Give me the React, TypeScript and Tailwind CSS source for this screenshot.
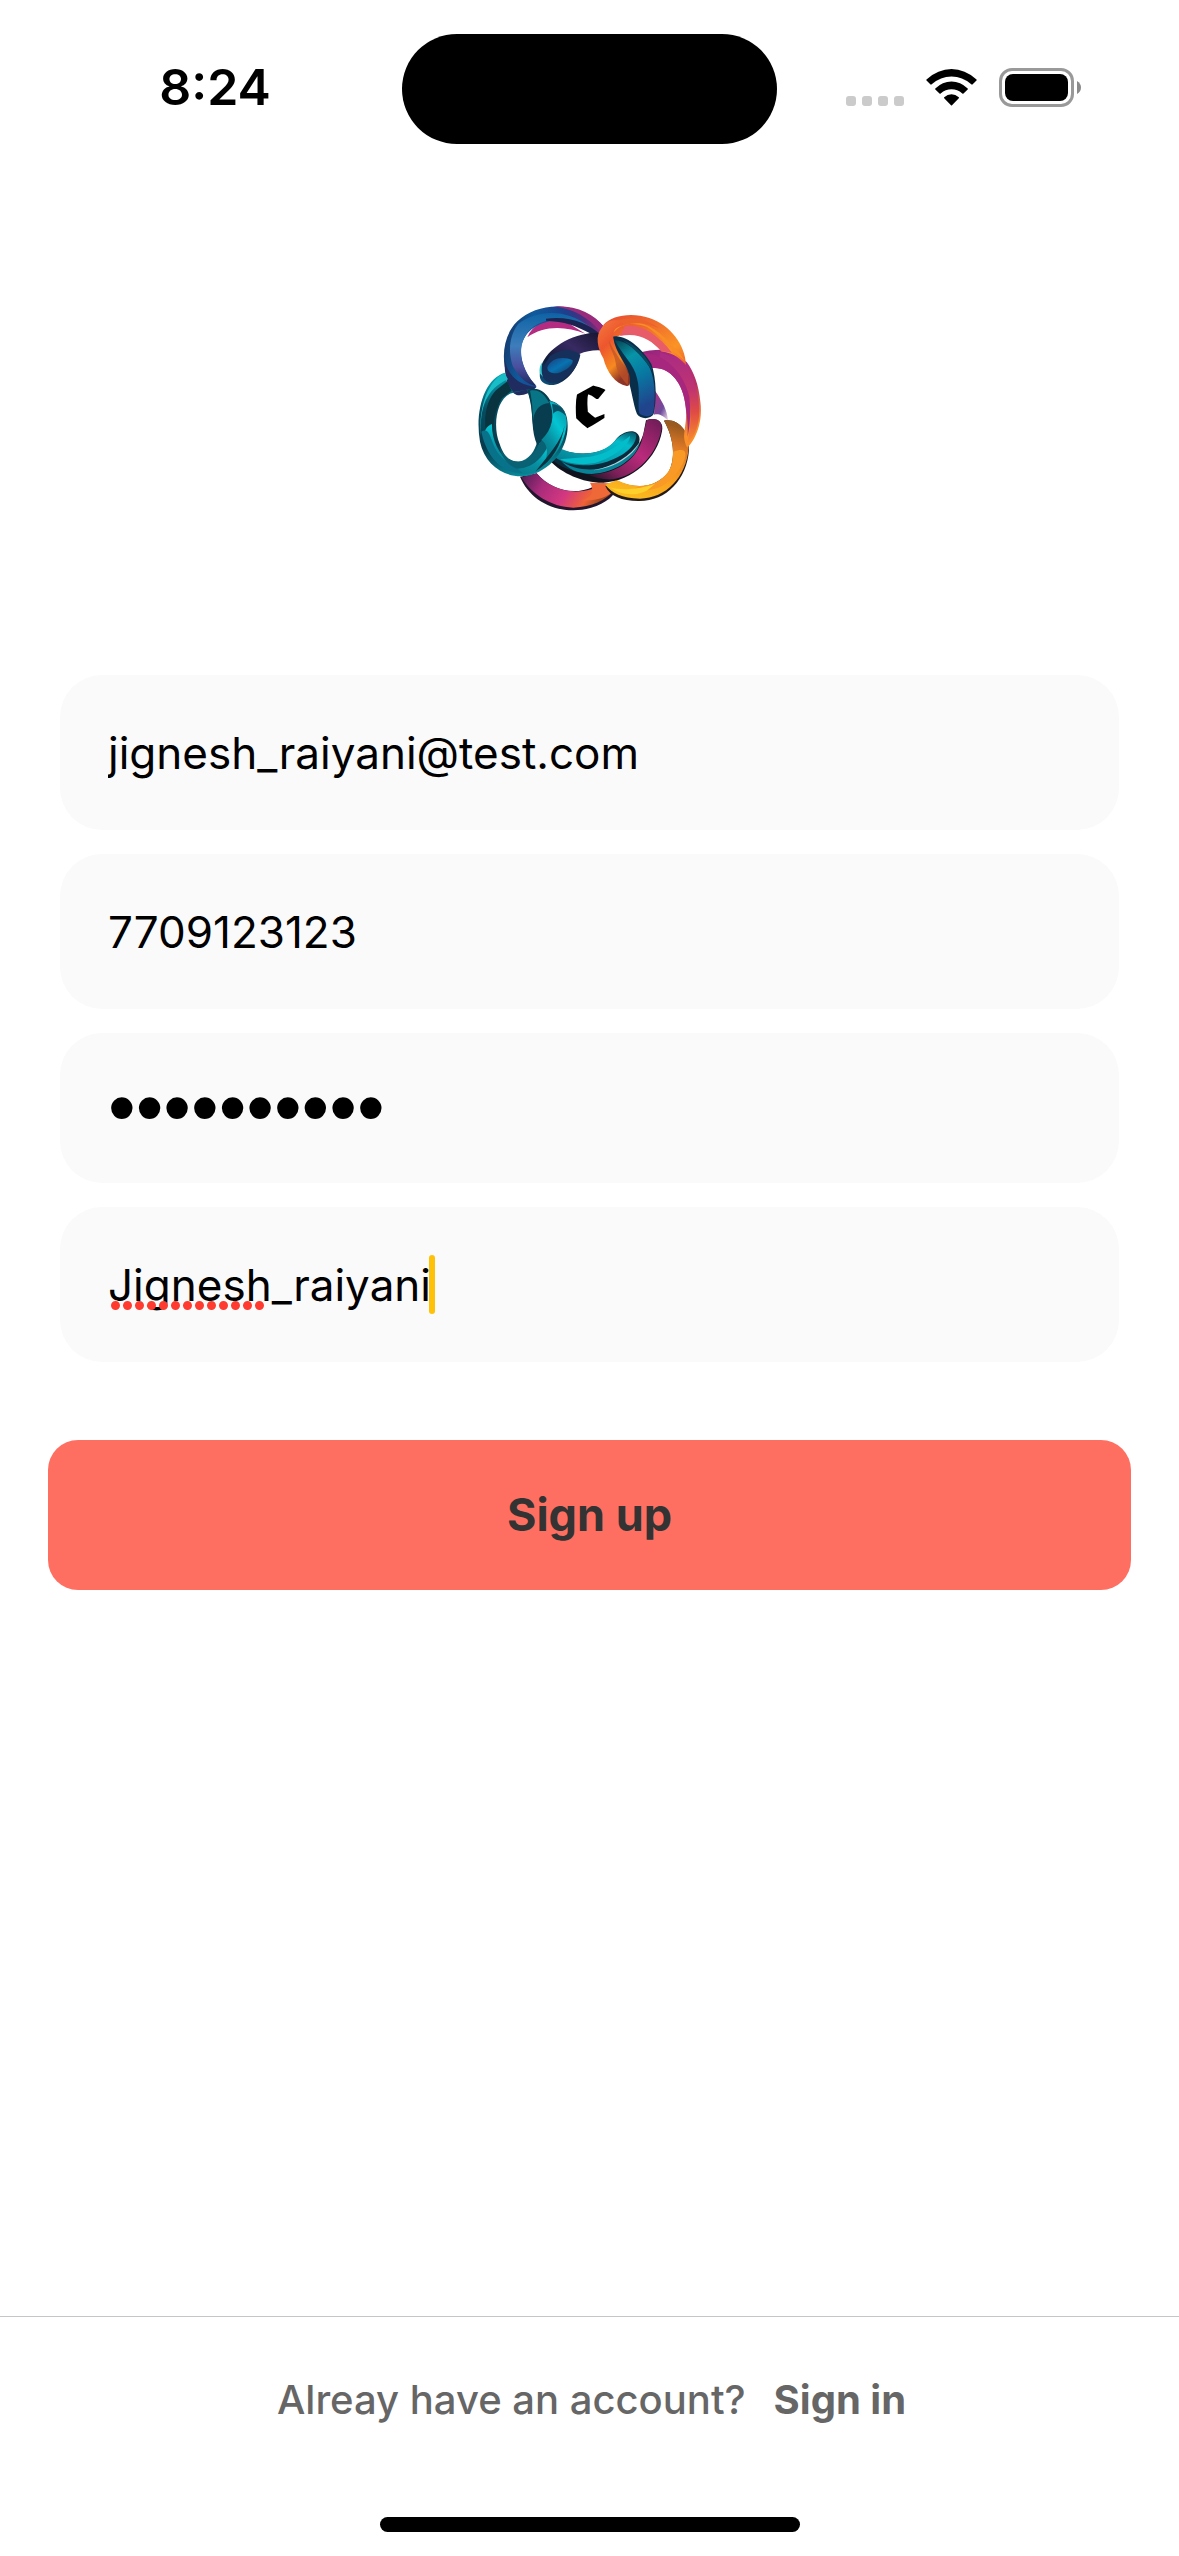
import React from "react";

function StatusBar() {
  return (
    <header className="grid grid-cols-[1fr_375px_1fr] items-center pt-[34px]">
      <div className="flex justify-center pb-1 pl-7">
        <time className="text-[50px] leading-[60px] font-semibold text-black">8:24</time>
      </div>
      <div className="h-[110px] rounded-full bg-black" />
      <div className="flex items-center justify-center pr-7 pb-1">
        <svg className="h-[39px] w-[236px]" viewBox="0 0 236 39" aria-label="Signal, Wi-Fi and battery">
          <g fill="#cbcbcb">
            <rect x="0" y="28" width="10" height="10" rx="3" />
            <rect x="16" y="28" width="10" height="10" rx="3" />
            <rect x="32" y="28" width="10" height="10" rx="3" />
            <rect x="48" y="28" width="10" height="10" rx="3" />
          </g>
          <g fill="#000">
            <path d="M80.5 11.5 Q92 1 105.500 1 Q119 1 130.500 11.500 Q131 12 130.500 12.500 L126.700 16.300 Q126 17 125.300 16.300 Q116.500 8.500 105.500 8.500 Q94.500 8.500 85.700 16.300 Q85 17 84.300 16.300 L80.500 12.500 Q80 12 80.500 11.500Z" />
            <path d="M89.300 20.500 Q96.500 13.500 105.500 13.500 Q114.500 13.500 121.700 20.500 Q122 21 121.700 21.400 L117.500 25.500 Q117 26 116.300 25.500 Q111.500 21.300 105.500 21.300 Q99.500 21.300 94.700 25.500 Q94 26 93.500 25.500 L89.300 21.400 Q89 21 89.300 20.500Z" />
            <path d="M98.200 29.300 Q101.500 26.300 105.500 26.300 Q109.500 26.300 112.800 29.300 Q113.300 29.800 112.800 30.300 L106 37.200 Q105.500 37.600 105 37.200 L98.200 30.300 Q97.700 29.800 98.200 29.300Z" />
          </g>
          <rect x="154.500" y="1.500" width="72" height="36" rx="11.500" fill="none" stroke="#999" strokeWidth="3" />
          <rect x="159" y="6" width="63" height="27" rx="8" fill="#000" />
          <path d="M231 13 Q235 15.500 235 19.500 Q235 23.500 231 26Z" fill="#8a8a8a" />
        </svg>
      </div>
    </header>
  );
}

function Logo() {
  return (
    <svg className="h-[240px] w-[260px]" viewBox="0 0 780 720" role="img" aria-label="Logo">
      <defs>
        <linearGradient id="blueRing" x1="0" y1="0" x2="1" y2="0.2">
          <stop offset="0" stopColor="#17315f" />
          <stop offset="0.3" stopColor="#0f5a9c" />
          <stop offset="0.6" stopColor="#1d3f8c" />
          <stop offset="0.8" stopColor="#4a2f80" />
          <stop offset="1" stopColor="#8d2a78" />
        </linearGradient>
        <linearGradient id="blueFace" x1="0" y1="0" x2="0" y2="1">
          <stop offset="0" stopColor="#0e63a4" />
          <stop offset="0.45" stopColor="#3d7dbb" />
          <stop offset="0.75" stopColor="#4b4d9d" />
          <stop offset="1" stopColor="#1c2b5e" />
        </linearGradient>
        <linearGradient id="darkArc" x1="0" y1="1" x2="1" y2="0">
          <stop offset="0" stopColor="#0a5b86" />
          <stop offset="0.3" stopColor="#111a38" />
          <stop offset="0.6" stopColor="#382a62" />
          <stop offset="1" stopColor="#101126" />
        </linearGradient>
        <linearGradient id="eye" x1="0" y1="0" x2="1" y2="1">
          <stop offset="0" stopColor="#1c3b7c" />
          <stop offset="0.5" stopColor="#0873b2" />
          <stop offset="1" stopColor="#173562" />
        </linearGradient>
        <linearGradient id="tealRight" x1="0" y1="0" x2="0.3" y2="1">
          <stop offset="0" stopColor="#07424f" />
          <stop offset="0.3" stopColor="#0794a8" />
          <stop offset="0.6" stopColor="#0878a2" />
          <stop offset="1" stopColor="#20458d" />
        </linearGradient>
        <linearGradient id="orangeTop" x1="0" y1="0" x2="1" y2="1">
          <stop offset="0" stopColor="#e84a32" />
          <stop offset="0.4" stopColor="#ef6e2c" />
          <stop offset="0.75" stopColor="#fb9425" />
          <stop offset="1" stopColor="#ee642f" />
        </linearGradient>
        <linearGradient id="orangeLeg" x1="0" y1="0" x2="0.5" y2="1">
          <stop offset="0" stopColor="#f47a3d" />
          <stop offset="0.4" stopColor="#ed562e" />
          <stop offset="0.75" stopColor="#f78a20" />
          <stop offset="1" stopColor="#8e3427" />
        </linearGradient>
        <linearGradient id="magentaRing" x1="0" y1="0" x2="0.5" y2="1">
          <stop offset="0" stopColor="#8f2478" />
          <stop offset="0.35" stopColor="#b42b86" />
          <stop offset="0.65" stopColor="#b73164" />
          <stop offset="1" stopColor="#f9902a" />
        </linearGradient>
        <linearGradient id="redFace" x1="0" y1="0" x2="0" y2="1">
          <stop offset="0" stopColor="#a92b84" />
          <stop offset="0.4" stopColor="#bf3472" />
          <stop offset="0.65" stopColor="#e04a45" />
          <stop offset="1" stopColor="#f9912b" />
        </linearGradient>
        <linearGradient id="amber" x1="0.6" y1="0" x2="0.3" y2="1">
          <stop offset="0" stopColor="#9b5a20" />
          <stop offset="0.25" stopColor="#df7a25" />
          <stop offset="0.6" stopColor="#f99a20" />
          <stop offset="1" stopColor="#fbbc1e" />
        </linearGradient>
        <linearGradient id="magentaBottom" x1="0" y1="0" x2="1" y2="0.25">
          <stop offset="0" stopColor="#4a1c50" />
          <stop offset="0.3" stopColor="#a92b7c" />
          <stop offset="0.6" stopColor="#d33880" />
          <stop offset="0.85" stopColor="#ee6138" />
          <stop offset="1" stopColor="#a34a20" />
        </linearGradient>
        <linearGradient id="magentaInner" x1="1" y1="0" x2="0" y2="1">
          <stop offset="0" stopColor="#6a1c55" />
          <stop offset="0.45" stopColor="#bb2a7c" />
          <stop offset="0.75" stopColor="#7c2058" />
          <stop offset="1" stopColor="#10131f" />
        </linearGradient>
        <linearGradient id="tealBottom" x1="0" y1="1" x2="1" y2="0">
          <stop offset="0" stopColor="#077388" />
          <stop offset="0.4" stopColor="#05a2b2" />
          <stop offset="0.75" stopColor="#04bccb" />
          <stop offset="1" stopColor="#064f60" />
        </linearGradient>
        <linearGradient id="tealLeft" x1="0.3" y1="0" x2="0.5" y2="1">
          <stop offset="0" stopColor="#08a5b5" />
          <stop offset="0.3" stopColor="#064c60" />
          <stop offset="0.65" stopColor="#073a4b" />
          <stop offset="1" stopColor="#078c9d" />
        </linearGradient>
        <linearGradient id="tealLobe" x1="0.8" y1="0" x2="0.2" y2="1">
          <stop offset="0" stopColor="#0a94a6" />
          <stop offset="0.35" stopColor="#04c5d2" />
          <stop offset="0.65" stopColor="#078ea0" />
          <stop offset="1" stopColor="#087282" />
        </linearGradient>
        <linearGradient id="violetTail" x1="0" y1="0" x2="1" y2="1">
          <stop offset="0" stopColor="#b52d82" />
          <stop offset="0.6" stopColor="#6d4b9c" />
          <stop offset="1" stopColor="#f3ddec" />
        </linearGradient>
      </defs>

      <path d="M180 560C205 620 265 661 340 661C400 660 446 635 464 608L430 578L400 590C340 618 272 600 230 550Z" fill="#24152e" />
      <path d="M184 562C215 612 270 651 340 653C395 651 440 630 458 604L430 578L398 596C340 616 272 600 230 550Z" fill="url(#magentaBottom)" />
      <path d="M390 578L450 580L458 606C430 628 400 632 365 632C392 622 406 606 390 578Z" fill="#ef6838" />

      <path d="M612 392C655 384 690 425 687 480C680 570 618 635 535 633C485 632 450 620 436 588L470 572C530 600 590 592 626 545C648 505 642 445 612 392Z" fill="#241a17" />
      <path d="M612 392C655 384 690 425 686 475C679 560 618 626 540 626C485 624 456 610 436 584L470 570C530 600 590 592 626 545C648 505 642 445 612 392Z" fill="url(#amber)" />
      <path d="M640 485C682 470 682 490 668 522C635 585 580 612 522 596L540 588C590 588 625 558 637 520Z" fill="#f89a25" />
      <path d="M450 592C490 605 550 594 585 582L560 602C525 620 480 615 450 592Z" fill="#fdd02b" />

      <path d="M538 188C560 182 590 178 620 180L680 216C702 245 716 285 721 335C731 410 696 460 682 473C660 430 684 416 677 350C670 275 625 228 575 235Z" fill="url(#magentaRing)" />
      <path d="M600 186L674 220C700 260 722 320 717 380C712 425 696 448 681 462C692 415 696 365 688 326C677 270 650 224 600 205Z" fill="url(#redFace)" />
      <path d="M542 190C600 184 668 235 688 320C693 360 691 400 683 440C684 410 682 380 677 350C670 275 625 228 575 235Z" fill="#a7267e" />
      <path d="M585 302C608 335 622 362 624 391C606 374 594 370 582 374Z" fill="url(#violetTail)" />

      <path d="M430 105C455 76 515 66 568 84C632 106 676 165 678 225C662 208 645 190 604 184C565 137 510 114 464 145Z" fill="url(#orangeTop)" />
      <path d="M495 108C545 102 592 132 636 188L604 184C575 150 535 126 480 138Z" fill="#e85b68" />
      <path d="M455 99C510 79 578 100 628 158C650 178 666 196 674 212C632 180 603 136 560 110C520 96 485 98 460 128Z" fill="#f98e27" />
      <path d="M450 100C495 78 550 80 598 115C555 94 505 93 457 120Z" fill="#ec622d" />

      <path d="M202 142C218 104 255 84 300 84L376 131C315 107 250 106 202 142Z" fill="#b42c82" />
      <path d="M205 298C168 319 145 292 142 258C122 205 130 135 172 94C235 35 355 29 434 112L414 140C375 106 325 91 270 94C220 104 187 134 183 178C181 217 202 260 230 291Z" fill="url(#blueRing)" />
      <path d="M280 49C345 44 402 70 432 110L424 128C385 82 340 56 280 49Z" fill="#982b7b" />
      <path d="M175 101C235 58 320 55 392 112C334 81 270 78 220 110C190 134 180 166 184 203C190 238 210 267 229 287C210 286 180 270 158 227C143 182 149 135 175 101Z" fill="url(#blueFace)" />
      <path d="M134 208C143 255 174 285 229 291C212 311 188 318 170 315C145 305 132 260 134 208Z" fill="#202b60" />
      <path d="M258 86C325 76 388 100 420 133L390 130C350 108 312 94 258 92Z" fill="#1b2450" />

      <path d="M240 246C244 196 302 145 380 131C406 125 432 130 448 150L442 184C413 178 385 181 358 192C355 244 306 290 268 285C243 281 237 266 240 246Z" fill="url(#darkArc)" />
      <path d="M270 198C305 174 340 177 361 194C353 245 304 284 268 278C242 269 242 240 255 222Z" fill="#15315b" />
      <path d="M262 232C273 205 308 197 338 211C342 224 316 245 291 250C270 250 262 244 262 232Z" fill="url(#eye)" />
      <path d="M239 250C237 238 240 225 247 217C244 238 244 250 249 261Z" fill="#39c6cd" />

      <path d="M450 143C490 124 548 177 574 222C590 266 590 335 581 372C572 389 540 388 531 372C520 345 514 295 503 265C492 220 463 190 450 143Z" fill="#092e4a" />
      <path d="M464 151C500 151 552 195 571 238C588 280 586 337 579 371C571 381 548 381 538 370C532 342 542 306 531 265C522 222 485 193 464 151Z" fill="url(#tealRight)" />
      <path d="M488 151C528 164 568 205 578 244C551 206 524 176 488 151Z" fill="#0a4760" />

      <path d="M425 113C445 84 482 87 492 103C468 108 457 122 460 145C467 190 500 220 508 256C512 275 510 290 500 288C466 282 440 246 430 205C412 173 405 138 425 113Z" fill="url(#orangeLeg)" />
      <path d="M447 151C457 180 493 222 505 252L503 285C487 267 470 247 467 218C463 190 448 177 447 151Z" fill="#bd5328" opacity="0.7" />

      <path d="M558 391C587 380 613 393 606 424C592 504 518 574 430 578C370 579 305 550 270 512L310 495C395 560 520 530 550 432Z" fill="#10131d" />
      <path d="M560 391C587 380 611 393 604 421C590 494 530 557 460 568C430 570 405 563 380 553C450 558 530 520 548 442Z" fill="url(#magentaInner)" />
      <path d="M289 474C350 501 433 495 464 454C484 423 528 412 538 441C547 482 475 540 397 548C340 551 296 530 276 508Z" fill="#0a2b3b" />
      <path d="M286 468C350 505 428 494 465 452C487 428 522 418 529 434C530 485 440 528 370 526C335 526 305 517 285 502Z" fill="url(#tealBottom)" />
      <path d="M390 500C445 492 475 464 510 438C512 460 463 503 404 519C365 527 324 520 300 508Z" fill="#03bdca" />
      <path d="M303 512C365 560 496 543 540 454C533 503 466 550 395 552C350 550 323 536 303 512Z" fill="#078297" />
      <path d="M400 541C465 529 511 497 539 457C516 502 465 534 400 541Z" fill="#a9d5dc" />

      <path fillRule="evenodd" d="M135 248C72 266 44 365 60 455C76 533 148 572 213 555C290 530 333 455 321 385C315 352 290 337 268 331C256 303 229 294 202 299L160 306C145 288 137 268 135 248ZM160 308C110 318 96 408 119 462C131 499 151 517 176 515C206 511 226 482 232 453C214 415 219 370 211 330L201 299Z" fill="url(#tealLeft)" />
      <path d="M134 249C75 275 55 374 63 438C58 352 80 296 144 268Z" fill="#19bdc7" />
      <path d="M108 301C63 348 64 451 117 510C94 450 91 383 126 325L155 302L142 274Z" fill="#08333f" />
      <path d="M96 402C94 455 127 521 177 524C222 517 232 484 239 458L270 445L303 450C286 502 240 551 190 553C121 550 84 488 72 430C77 414 86 405 96 402Z" fill="url(#tealLobe)" />
      <path d="M64 425C78 493 121 551 187 548C158 520 116 518 94 447C86 421 76 417 64 425Z" fill="#08728a" />
      <path d="M119 470C135 510 163 520 193 512C226 501 232 467 246 448L264 468C238 521 202 535 171 536C141 524 125 501 119 470Z" fill="#096174" />
      <path d="M203 300C233 287 260 306 276 341C285 380 264 416 246 450L232 466C213 425 220 376 211 336Z" fill="#073d4e" />
      <path d="M210 302C237 296 252 312 268 339C240 340 222 361 219 393C219 358 215 326 210 302Z" fill="#087586" />
      <path d="M268 333C306 340 327 377 319 413C309 465 286 499 252 524C267 490 262 459 244 450C278 418 286 377 268 333Z" fill="url(#tealLobe)" />
      <path d="M276 342C306 345 313 361 317 377C299 360 289 359 280 371Z" fill="#075166" />
      <path d="M314 406C305 462 279 512 227 544C270 490 304 455 314 406Z" fill="#09313f" />

      <text x="391" y="404" textAnchor="middle" fontSize="212" fontWeight="700" fill="#000" className="font-['DejaVu_Math_TeX_Gyre','DejaVu_Sans','Liberation_Serif',serif]">𝖈</text>
    </svg>
  );
}

type FieldProps = {
  label: string;
  type: string;
  value: string;
  children?: React.ReactNode;
};

function Field({ label, type, value, children }: FieldProps) {
  return (
    <div className="relative">
      <input
        type={type}
        aria-label={label}
        defaultValue={value}
        spellCheck={false}
        autoComplete="off"
        className={
          type === "password"
            ? "block h-[150px] w-full rounded-[42px] bg-[#fafafa] px-12 font-['Liberation_Sans',sans-serif] text-[79px] text-black outline-none"
            : "block h-[155px] w-full rounded-[42px] bg-[#fafafa] px-12 text-[44px] text-black outline-none"
        }
      />
      {children}
    </div>
  );
}

export default function App() {
  return (
    <div className="flex min-h-screen flex-col bg-white font-[Inter,'Liberation_Sans',sans-serif]">
      <StatusBar />
      <main className="flex flex-1 flex-col">
        <div className="flex justify-center pt-[146px]">
          <Logo />
        </div>
        <form className="mt-[145px] px-12" onSubmit={(e) => e.preventDefault()}>
          <div className="flex flex-col gap-6 px-3">
            <Field label="Email" type="email" value="jignesh_raiyani@test.com" />
            <Field label="Phone" type="tel" value="7709123123" />
            <Field label="Password" type="password" value="abcdefghij" />
            <Field label="Username" type="text" value="Jignesh_raiyani">
              <svg className="pointer-events-none absolute top-[94px] left-[51px] h-[9px] w-[154px]" viewBox="0 0 154 9" aria-hidden="true">
                <path d="M4.500 4.500H149" stroke="#ff3b30" strokeWidth="9" strokeLinecap="round" strokeDasharray="0 12" />
              </svg>
              <span className="pointer-events-none absolute top-12 left-[369px] h-[59px] w-[6px] rounded-full bg-[#ffc107]" />
            </Field>
          </div>
          <button type="submit" className="mt-[78px] h-[150px] w-full rounded-[30px] bg-[#ff6f61] text-[45px] font-bold text-[#333]">
            Sign up
          </button>
        </form>
      </main>
      <footer className="flex h-[240px] flex-col items-center justify-between border-t border-[#c6c6c6] pt-[59px] pb-6">
        <p className="flex gap-7 pl-1 text-[40px] leading-[48px] font-medium text-[#666]">
          <span>Alreay have an account?</span>
          <a href="#signin" className="font-bold">Sign in</a>
        </p>
        <div className="h-[15px] w-[420px] rounded-full bg-black" />
      </footer>
    </div>
  );
}
